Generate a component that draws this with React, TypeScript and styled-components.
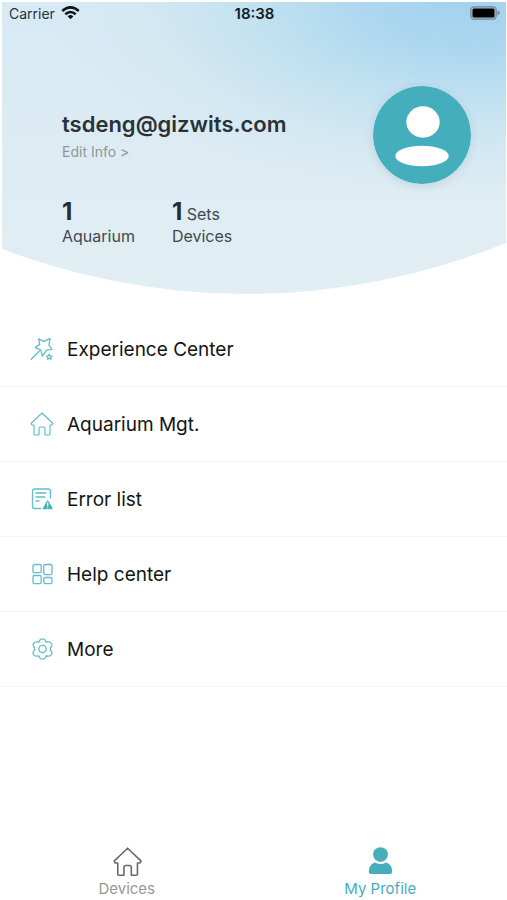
import React from "react";
import styled, { createGlobalStyle } from "styled-components";

const teal = "#45aebd";

const GlobalStyle = createGlobalStyle`
  *, *::before, *::after { box-sizing: border-box; }
  body {
    margin: 0;
    background: #fff;
    color: #141414;
    font-family: Inter, "Liberation Sans", sans-serif;
  }
  a { color: inherit; text-decoration: none; }
`;

const Page = styled.div`
  display: flex;
  flex-direction: column;
  min-height: 100vh;
`;

const Header = styled.header`
  margin: 2px 1px 0 2px;
  min-height: 292px;
  background:
    radial-gradient(ellipse 84% 190px at 94% 0, #a2d2ef 0%, #acd7ef 25%, #c2e1f0 52%, #d4e8f2 78%, rgba(221, 235, 243, 0) 100%),
    linear-gradient(#d7eaf5, #ddebf3 50%, #e1eff4);
  clip-path: ellipse(684px 684px at 48.5% -392px);
`;

const StatusBar = styled.div`
  display: grid;
  grid-template-columns: 1fr auto 1fr;
  align-items: center;
  height: 22px;
  padding: 0 6px 0 7px;
  font-size: 14px;
`;

const Carrier = styled.span`
  display: flex;
  align-items: center;
  gap: 6px;
  color: #26323a;
`;

const Clock = styled.time`
  font-size: 15px;
  font-weight: 600;
  color: #111a22;
`;

const Battery = styled.svg`
  justify-self: end;
`;

const Profile = styled.section`
  display: flex;
  justify-content: space-between;
  align-items: flex-start;
  padding: 62px 35px 0 60px;
`;

const Identity = styled.div`
  padding-top: 24px;
`;

const Name = styled.h1`
  margin: 0;
  font-size: 22px;
  line-height: 28px;
  font-weight: 600;
  color: #2b3236;
`;

const EditLink = styled.a`
  display: block;
  margin-top: 4px;
  font-size: 14px;
  line-height: 20px;
  color: #8d979c;
`;

const Stats = styled.dl`
  display: flex;
  gap: 37px;
  margin: 38px 0 0;
`;

const Stat = styled.div`
  display: flex;
  flex-direction: column-reverse;
  font-size: 16px;
  line-height: 20px;
  color: #40494d;
`;

const StatValue = styled.dd`
  margin: 0;
  line-height: 24px;

  strong {
    font-size: 24px;
    font-weight: 700;
    color: #262c2f;
  }
`;

const Avatar = styled.svg`
  flex: none;
  border-radius: 50%;
  box-shadow: 0 2px 8px rgba(70, 110, 130, 0.18);
`;

const Menu = styled.nav`
  margin-top: 18px;
`;

const MenuRow = styled.a`
  display: flex;
  align-items: center;
  gap: 13px;
  height: 75px;
  padding: 0 30px;
  border-bottom: 1px solid #f3f3f3;
  font-size: 19px;
`;

const MenuIcon = styled.svg`
  flex: none;
  fill: none;
  stroke: #63bccb;
  stroke-width: 1.3;
  stroke-linecap: round;
  stroke-linejoin: round;
`;

const TabBar = styled.nav`
  display: grid;
  grid-template-columns: 1fr 1fr;
  margin-top: auto;
`;

const Tab = styled.a<{ $active?: boolean }>`
  display: flex;
  flex-direction: column;
  align-items: center;
  gap: 1px;
  padding-bottom: 1px;
  font-size: 15px;
  line-height: 20px;
  color: ${(p) => (p.$active ? teal : "#989898")};
`;

const housePath = "M1 11.5 L12 1 L23 11.5 L22 13 H20 V22 Q20 23 19 23 H15 V16.5 Q15 15 13.5 15 H10.5 Q9 15 9 16.5 V23 H5 Q4 23 4 22 V13 H2 Z";

const menuItems = [
  {
    label: "Experience Center",
    icon: (
      <>
        <path d="M8.6 1.8 L13.6 4.4 L20 1.6 L18.9 8 L22 12.4 L16.6 13.2 L12.4 19 L10.7 12.9 L5.2 10.6 L9.7 7.4 Z" />
        <path d="M9.3 14.3 L1.2 22.2" />
        <path d="M19.2 17.2 L20 18.9 L22 19.1 L20.6 20.4 L20.9 22.3 L19.2 21.4 L17.5 22.3 L17.8 20.4 L16.4 19.1 L18.4 18.9 Z" />
      </>
    ),
  },
  { label: "Aquarium Mgt.", icon: <path d={housePath} strokeWidth="1.2" /> },
  {
    label: "Error list",
    icon: (
      <>
        <path d="M20.5 11 V4 Q20.5 2 18.5 2 H4.5 Q2.5 2 2.5 4 V19.5 Q2.5 21.5 4.5 21.5 H10.5" />
        <path d="M6 6 H16 M6 10 H15 M6 14 H9" />
        <path d="M17.7 14 L22 21.5 H13.4 Z" fill={teal} stroke={teal} />
        <path d="M17.7 16 V18.8 M17.7 20.8 V21" stroke="#fff" />
      </>
    ),
  },
  {
    label: "Help center",
    icon: (
      <>
        <rect x="3" y="2.5" width="8.2" height="8.2" rx="1.5" />
        <rect x="13.8" y="2.5" width="8.2" height="10.2" rx="1.5" />
        <rect x="3" y="13.5" width="8.2" height="8.2" rx="1.5" />
        <rect x="13.8" y="15.5" width="8.2" height="6.2" rx="1.8" />
      </>
    ),
  },
  {
    label: "More",
    icon: (
      <>
        <path d="M9.7 3.2 Q10.3 1.8 12.5 1.8 T15.3 3.2 L16 5 L18.3 4.8 Q20.4 4.7 21.5 6.5 T21.6 9.4 L20.4 11 V13 L21.6 14.6 Q22.6 15.7 21.5 17.5 T18.3 19.2 L16 19 L15.3 20.8 Q14.7 22.2 12.5 22.2 T9.7 20.8 L9 19 L6.7 19.2 Q4.6 19.3 3.5 17.5 T3.4 14.6 L4.6 13 V11 L3.4 9.4 Q2.4 8.3 3.5 6.5 T6.7 4.8 L9 5 Z" />
        <circle cx="12.5" cy="12" r="3.7" />
      </>
    ),
  },
];

export default function App() {
  return (
    <Page>
      <GlobalStyle />
      <Header>
        <StatusBar>
          <Carrier>
            Carrier
            <svg width="19" height="14" viewBox="0 0 19 14" fill="none" stroke="#0c1217" strokeWidth="2.5" aria-label="Wi-Fi">
              <path d="M1.2 5 Q9.5 -2.2 17.8 5" />
              <path d="M4.3 8.3 Q9.5 3.7 14.7 8.3" />
              <path d="M9.5 13.2 L6.6 10.2 Q9.5 8 12.4 10.2 Z" fill="#0c1217" stroke="none" />
            </svg>
          </Carrier>
          <Clock>18:38</Clock>
          <Battery width="30" height="14" viewBox="0 0 30 14" aria-label="Battery full">
            <rect x="0.8" y="0.8" width="25.4" height="12.4" rx="3.5" fill="#9dc1d5" stroke="#72899a" strokeWidth="1.3" />
            <rect x="2.5" y="2.5" width="22" height="9" rx="1.5" fill="#000" />
            <path d="M27.5 4.5 Q29.8 5.3 29.8 7 T27.5 9.5 Z" fill="#72899a" />
          </Battery>
        </StatusBar>
        <Profile>
          <Identity>
            <Name>tsdeng@gizwits.com</Name>
            <EditLink href="#edit">Edit Info &gt;</EditLink>
            <Stats>
              <Stat>
                <dt>Aquarium</dt>
                <StatValue><strong>1</strong></StatValue>
              </Stat>
              <Stat>
                <dt>Devices</dt>
                <StatValue><strong>1</strong> Sets</StatValue>
              </Stat>
            </Stats>
          </Identity>
          <Avatar width="98" height="98" viewBox="0 0 98 98" role="img" aria-label="Profile picture">
            <circle cx="49" cy="49" r="49" fill={teal} />
            <ellipse cx="50" cy="36" rx="16.7" ry="15.7" fill="#fff" />
            <ellipse cx="49" cy="70" rx="26.7" ry="10.2" fill="#fff" />
          </Avatar>
        </Profile>
      </Header>
      <Menu aria-label="Profile menu">
        {menuItems.map((item) => (
          <MenuRow href="#" key={item.label}>
            <MenuIcon width="24" height="24" viewBox="0 0 24 24" aria-hidden="true">{item.icon}</MenuIcon>
            {item.label}
          </MenuRow>
        ))}
      </Menu>
      <TabBar aria-label="Main">
        <Tab href="#devices">
          <svg width="32" height="32" viewBox="-1.5 -0.8 26 26" fill="none" stroke="#696969" strokeWidth="1.3" strokeLinejoin="round" aria-hidden="true">
            <path d={housePath} />
          </svg>
          Devices
        </Tab>
        <Tab href="#profile" $active aria-current="page">
          <svg width="32" height="32" viewBox="0 0 32 32" fill={teal} aria-hidden="true">
            <circle cx="16.5" cy="8.6" r="7.4" />
            <path d="M11 16.5 Q16.5 19.5 22 16.5 Q28.2 18.5 28.2 25.5 Q28.2 28 25.7 28 H7.3 Q4.8 28 4.8 25.5 Q4.8 18.5 11 16.5 Z" />
          </svg>
          My Profile
        </Tab>
      </TabBar>
    </Page>
  );
}
